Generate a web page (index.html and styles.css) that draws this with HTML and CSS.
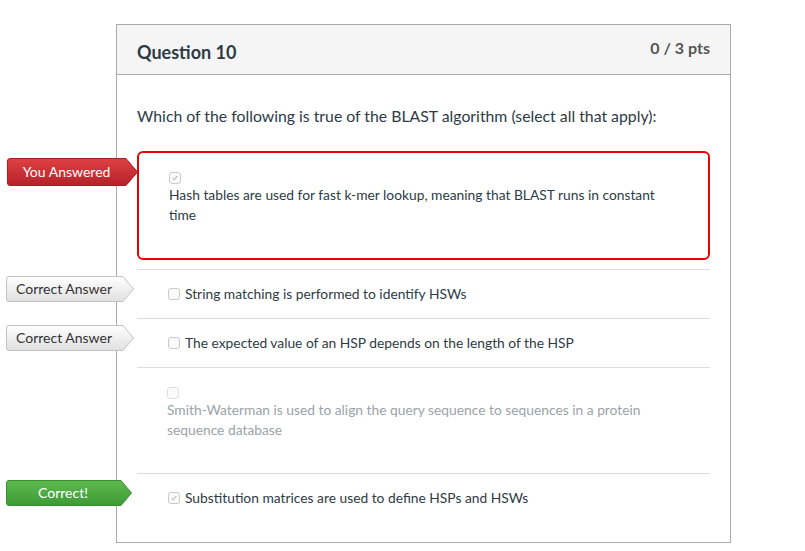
FILE: index.html
```html
<!DOCTYPE html>
<html>
<head>
<meta charset="utf-8">
<link rel="stylesheet" href="styles.css">
</head>
<body>
<div class="card">
  <div class="card-header">
    <h2 class="q-title">Question 10</h2>
    <div class="pts">0 / 3 pts</div>
  </div>
  <div class="card-body">
    <p class="q-text">Which of the following is true of the BLAST algorithm (select all that apply):</p>
    <div class="answers">
      <div class="answer answer--selected">
        <span class="flag flag--wrong">
          <svg class="flag-bg" viewBox="0 0 131 28" preserveAspectRatio="none">
            <defs><linearGradient id="gr" x1="0" y1="0" x2="0" y2="1"><stop offset="0" stop-color="#df4143"/><stop offset="1" stop-color="#b5222a"/></linearGradient></defs>
            <path d="M3,0.5 H119 L130.5,14 L119,27.5 H3 Q0.5,27.5 0.5,25 V3 Q0.5,0.5 3,0.5 Z" fill="url(#gr)" stroke="#a81e24"/>
          </svg>
          <span class="flag-text">You Answered</span>
        </span>
        <span class="cb cb--checked"><svg viewBox="0 0 12 12"><path d="M3.2,6.3 L5.1,8.2 L8.8,3.6" fill="none" stroke="#9a9a9a" stroke-width="1.1"/></svg></span>
        <div class="answer-text">Hash tables are used for fast k-mer lookup, meaning that BLAST runs in constant time</div>
      </div>
      <div class="answer answer--row">
        <span class="flag flag--correct">
          <svg class="flag-bg" viewBox="0 0 128 26" preserveAspectRatio="none">
            <defs><linearGradient id="gg1" x1="0" y1="0" x2="0" y2="1"><stop offset="0" stop-color="#ffffff"/><stop offset="1" stop-color="#e0e0e0"/></linearGradient></defs>
            <path d="M3,0.5 H117 L127.5,13 L117,25.5 H3 Q0.5,25.5 0.5,23 V3 Q0.5,0.5 3,0.5 Z" fill="url(#gg1)" stroke="#c2c2c2"/>
          </svg>
          <span class="flag-text">Correct Answer</span>
        </span>
        <span class="cb"></span>
        <span class="answer-text">String matching is performed to identify HSWs</span>
      </div>
      <div class="answer answer--row">
        <span class="flag flag--correct">
          <svg class="flag-bg" viewBox="0 0 128 26" preserveAspectRatio="none">
            <defs><linearGradient id="gg2" x1="0" y1="0" x2="0" y2="1"><stop offset="0" stop-color="#ffffff"/><stop offset="1" stop-color="#e0e0e0"/></linearGradient></defs>
            <path d="M3,0.5 H117 L127.5,13 L117,25.5 H3 Q0.5,25.5 0.5,23 V3 Q0.5,0.5 3,0.5 Z" fill="url(#gg2)" stroke="#c2c2c2"/>
          </svg>
          <span class="flag-text">Correct Answer</span>
        </span>
        <span class="cb"></span>
        <span class="answer-text">The expected value of an HSP depends on the length of the HSP</span>
      </div>
      <div class="answer answer--block answer--muted">
        <span class="cb cb--faint"></span>
        <div class="answer-text">Smith-Waterman is used to align the query sequence to sequences in a protein sequence database</div>
      </div>
      <div class="answer answer--row">
        <span class="flag flag--right">
          <svg class="flag-bg" viewBox="0 0 126 26" preserveAspectRatio="none">
            <defs><linearGradient id="gn" x1="0" y1="0" x2="0" y2="1"><stop offset="0" stop-color="#5cbb4e"/><stop offset="1" stop-color="#3e9a36"/></linearGradient></defs>
            <path d="M3,0.5 H115 L125.5,13 L115,25.5 H3 Q0.5,25.5 0.5,23 V3 Q0.5,0.5 3,0.5 Z" fill="url(#gn)" stroke="#3a8f33"/>
          </svg>
          <span class="flag-text">Correct!</span>
        </span>
        <span class="cb cb--checked"><svg viewBox="0 0 12 12"><path d="M3.2,6.3 L5.1,8.2 L8.8,3.6" fill="none" stroke="#9a9a9a" stroke-width="1.1"/></svg></span>
        <span class="answer-text">Substitution matrices are used to define HSPs and HSWs</span>
      </div>
    </div>
  </div>
</div>
</body>
</html>
```

FILE: styles.css
```css
* { box-sizing: border-box; }

body {
  margin: 0;
  background: #ffffff;
  font-family: Lato, "Noto Sans", sans-serif;
  color: #2d3b45;
}

.card {
  width: 615px;
  margin: 24px 0 0 116px;
  border: 1px solid #a9a9a9;
  background: #ffffff;
}

.card-header {
  height: 50px;
  display: flex;
  justify-content: space-between;
  align-items: flex-start;
  padding: 15px 20px 0 20px;
  background: #f5f5f5;
  border-bottom: 1px solid #a9a9a9;
}

.q-title {
  margin: 0;
  font-size: 18px;
  line-height: 24px;
  font-weight: 700;
  color: #2d3b45;
}

.pts {
  margin-top: -4px;
  font-size: 16px;
  line-height: 24px;
  font-weight: 700;
  color: #555555;
}

.card-body {
  padding: 29px 20px 20px 20px;
}

.q-text {
  margin: 0;
  font-size: 15.8px;
  line-height: 24px;
  color: #2d3b45;
}

.answers {
  margin-top: 23px;
}

.answer {
  position: relative;
  font-size: 13.8px;
  line-height: 20px;
  color: #2d3b45;
}

.answer--selected {
  border: 2px solid #ee0000;
  border-radius: 6px;
  padding: 19px 30px 33px 30px;
  margin-bottom: 9px;
}

.answer--row {
  display: flex;
  align-items: center;
  gap: 5px;
  padding: 14px 30px 14px 31px;
  border-top: 1px solid #dcdcdc;
}

.answer--block {
  padding: 19px 31px 33px 30px;
  border-top: 1px solid #dcdcdc;
}

.answer--muted {
  color: #9aa3a9;
}

.cb {
  display: block;
  flex: none;
  width: 12px;
  height: 12px;
  border: 1px solid #c9c9c9;
  border-radius: 3px;
  background: #fbfbfb;
}

.cb svg {
  display: block;
  width: 10px;
  height: 10px;
}

.cb--faint {
  border-color: #dedede;
}

.answer--selected .cb,
.answer--block .cb {
  margin-bottom: 1px;
}

.flag {
  position: absolute;
  left: -131px;
  width: 128px;
  height: 26px;
  display: flex;
  align-items: center;
  font-size: 14px;
  line-height: 20px;
}

.flag--wrong {
  left: -132px;
  top: 5px;
  width: 131px;
  height: 28px;
  color: #ffffff;
}

.flag--correct {
  top: 6px;
  color: #333333;
}

.flag--right {
  top: 6px;
  width: 126px;
  color: #ffffff;
}

.flag-bg {
  position: absolute;
  left: 0;
  top: 0;
  width: 100%;
  height: 100%;
}

.flag-text {
  position: relative;
  width: calc(100% - 12px);
  text-align: center;
}
```
